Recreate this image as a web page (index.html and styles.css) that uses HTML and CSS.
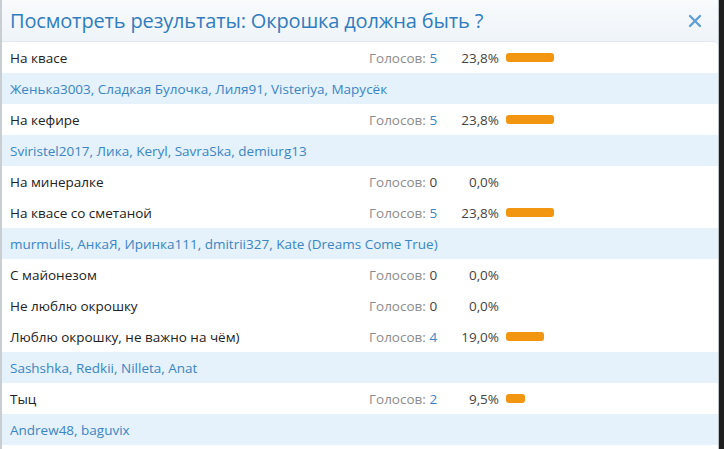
FILE: index.html
```html
<!DOCTYPE html>
<html lang="ru">
<head>
<meta charset="utf-8">
<link rel="stylesheet" href="styles.css">
</head>
<body>
<div class="dialog">
  <div class="header">
    <h2 class="title">Посмотреть результаты: Окрошка должна быть ?</h2>
    <span class="close">
      <svg width="14" height="14" viewBox="0 0 14 14"><path d="M2 2L12 12M12 2L2 12" stroke="#5f9fd6" stroke-width="2.4" stroke-linecap="round"/></svg>
    </span>
  </div>
  <div class="results">
    <div class="row">
      <span class="label">На квасе</span><span class="votes">Голосов: <b class="n">5</b></span><span class="pct">23,8%</span><span class="barcell"><i class="bar" style="width:48px"></i></span>
    </div>
    <div class="row voters">Женька3003, Сладкая Булочка, Лиля91, Visteriya, Марусёк</div>
    <div class="row">
      <span class="label">На кефире</span><span class="votes">Голосов: <b class="n">5</b></span><span class="pct">23,8%</span><span class="barcell"><i class="bar" style="width:48px"></i></span>
    </div>
    <div class="row voters">Sviristel2017, Лика, Keryl, SavraSka, demiurg13</div>
    <div class="row">
      <span class="label">На минералке</span><span class="votes">Голосов: <b class="z">0</b></span><span class="pct">0,0%</span><span class="barcell"></span>
    </div>
    <div class="row">
      <span class="label">На квасе со сметаной</span><span class="votes">Голосов: <b class="n">5</b></span><span class="pct">23,8%</span><span class="barcell"><i class="bar" style="width:48px"></i></span>
    </div>
    <div class="row voters">murmulis, АнкаЯ, Иринка111, dmitrii327, Kate (Dreams Come True)</div>
    <div class="row">
      <span class="label">С майонезом</span><span class="votes">Голосов: <b class="z">0</b></span><span class="pct">0,0%</span><span class="barcell"></span>
    </div>
    <div class="row">
      <span class="label">Не люблю окрошку</span><span class="votes">Голосов: <b class="z">0</b></span><span class="pct">0,0%</span><span class="barcell"></span>
    </div>
    <div class="row">
      <span class="label">Люблю окрошку, не важно на чём)</span><span class="votes">Голосов: <b class="n">4</b></span><span class="pct">19,0%</span><span class="barcell"><i class="bar" style="width:38px"></i></span>
    </div>
    <div class="row voters">Sashshka, Redkii, Nilleta, Anat</div>
    <div class="row">
      <span class="label">Тыц</span><span class="votes">Голосов: <b class="n">2</b></span><span class="pct">9,5%</span><span class="barcell"><i class="bar" style="width:19px"></i></span>
    </div>
    <div class="row voters">Andrew48, baguvix</div>
  </div>
</div>
</body>
</html>
```
FILE: styles.css
```css
html, body {
  margin: 0;
  padding: 0;
  background: #1e1e1e;
  height: 449px;
  overflow: hidden;
}
.dialog {
  width: 716px;
  height: 449px;
  border-left: 2px solid #c9ced3;
  border-right: 1px solid #b9bec3;
  background: linear-gradient(#f9fbfd, #eef4f9 41px, #eef4f9);
  font-family: "Open Sans", "Noto Sans", sans-serif;
  font-size: 13.5px;
  color: #222;
  box-sizing: content-box;
}
.header {
  height: 41px;
  display: flex;
  align-items: center;
  justify-content: space-between;
  padding: 0 16px 0 8px;
  box-sizing: border-box;
}
.title {
  margin: 0;
  font-weight: normal;
  font-size: 20px;
  color: #2f7dbf;
  letter-spacing: -0.15px;
}
.close {
  display: flex;
  width: 14px;
  height: 14px;
}
.results {
  background: #fff;
  border-top-right-radius: 5px;
  border-top: 1px solid #e2e8ee;
  height: 408px;
  box-sizing: border-box;
}
.row {
  display: grid;
  grid-template-columns: 359px 76px 54px 219px;
  align-items: center;
  height: 31px;
  padding-left: 8px;
  box-sizing: border-box;
}
.row.voters {
  display: flex;
  background: #e5f1fb;
  color: #3a86c4;
}
.votes { color: #8c8c8c; }
.votes b { font-weight: normal; }
.votes .n { color: #3a86c4; }
.votes .z { color: #444; }
.pct { text-align: right; color: #444; }
.barcell {
  display: flex;
  align-items: center;
  padding-left: 7px;
}
.bar {
  display: block;
  height: 9px;
  border-radius: 3px;
  background: #f29511;
}
```
